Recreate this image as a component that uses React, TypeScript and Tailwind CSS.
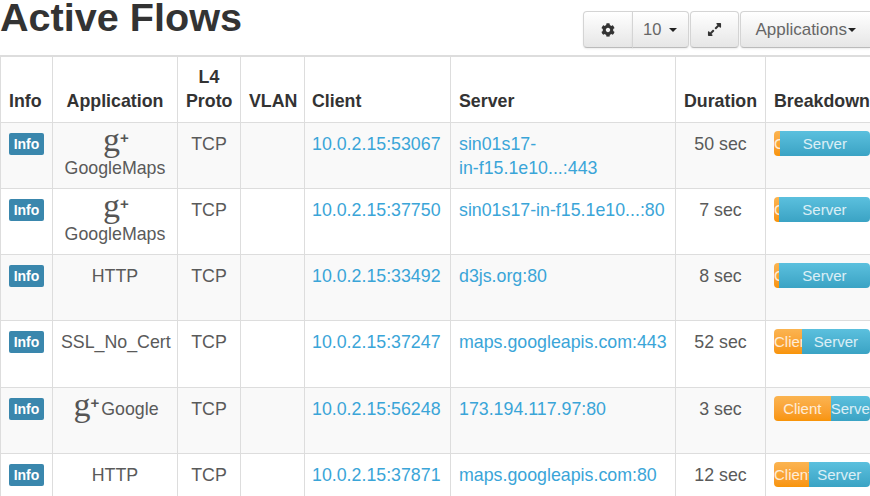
import { FaCog, FaExpandAlt } from 'react-icons/fa';

type Flow = {
  app: string;
  gplus?: 'stack' | 'inline';
  client: string;
  server: string;
  duration: string;
  clientPct: number;
};

const flows: Flow[] = [
  { app: 'GoogleMaps', gplus: 'stack', client: '10.0.2.15:53067', server: 'sin01s17-\nin-f15.1e10...:443', duration: '50 sec', clientPct: 6 },
  { app: 'GoogleMaps', gplus: 'stack', client: '10.0.2.15:37750', server: 'sin01s17-in-f15.1e10...:80', duration: '7 sec', clientPct: 5 },
  { app: 'HTTP', client: '10.0.2.15:33492', server: 'd3js.org:80', duration: '8 sec', clientPct: 5 },
  { app: 'SSL_No_Cert', client: '10.0.2.15:37247', server: 'maps.googleapis.com:443', duration: '52 sec', clientPct: 29 },
  { app: 'Google', gplus: 'inline', client: '10.0.2.15:56248', server: '173.194.117.97:80', duration: '3 sec', clientPct: 59 },
  { app: 'HTTP', client: '10.0.2.15:37871', server: 'maps.googleapis.com:80', duration: '12 sec', clientPct: 36 },
];

const th = 'border border-[#ddd] px-2 pb-[9px] align-bottom font-bold text-[#333]';
const td = 'border border-[#ddd] px-2 pt-[9px] align-top';
const btn = 'flex h-[37px] items-center justify-center border border-[#d4d4d4] border-b-[#bbb] bg-gradient-to-b from-white to-[#e6e6e6] text-[#666] shadow-[0_1px_2px_rgba(0,0,0,0.08)]';

const GPlus = () => (
  <span className="flex items-start text-[#555]">
    <span className="-mt-[4px] ml-[2px] font-['Liberation_Serif',serif] text-[34px] leading-[24px]">g</span>
    <span className="mt-[-1px] text-[15px] font-bold leading-[14px]">+</span>
  </span>
);

const Breakdown = ({ pct }: { pct: number }) => (
  <div className="-mt-px flex h-[25px] w-[96px] overflow-hidden rounded-[4px] text-[15px] leading-[25px] text-white/80">
    <div className="overflow-hidden whitespace-nowrap bg-gradient-to-b from-[#fbb450] to-[#f89406] text-center" style={{ width: `${pct}%` }}>
      Client
    </div>
    <div className="flex-1 overflow-hidden whitespace-nowrap bg-gradient-to-b from-[#5bc0de] to-[#3aa3c4] text-center">Server</div>
  </div>
);

export default function App() {
  return (
    <div className="h-[496px] w-[870px] overflow-hidden bg-white font-['Liberation_Sans',sans-serif] text-[17.8px] text-[#5a5a5a]">
      <div className="flex h-[55px] items-start justify-between">
        <h1 className="text-[39.6px] font-bold leading-[35px] text-[#333]">Active Flows</h1>
        <div className="mt-[11px] flex w-[287px] shrink-0 text-[16.5px]">
          <div className={`${btn} w-[50px] rounded-l-[4px]`}>
            <FaCog className="text-[14px] text-[#333]" />
          </div>
          <div className={`${btn} -ml-px w-[57px] gap-2 rounded-r-[4px]`}>
            10
            <span className="border-x-[4px] border-t-[4px] border-x-transparent border-t-[#222]" />
          </div>
          <div className={`${btn} ml-px w-[50px] rounded-[4px]`}>
            <FaExpandAlt className="text-[15px] text-[#333]" />
          </div>
          <div className={`${btn} ml-[1px] w-[130px] gap-px rounded-l-[4px] border-r-0 text-[17px]`}>
            Applications
            <span className="border-x-[4px] border-t-[4px] border-x-transparent border-t-[#222]" />
          </div>
        </div>
      </div>
      <table className="w-[880px] table-fixed border-collapse border-t-2 border-[#ddd] leading-[24px]">
        <colgroup>
          <col className="w-[52px]" />
          <col className="w-[125px]" />
          <col className="w-[63px]" />
          <col className="w-[64px]" />
          <col className="w-[146px]" />
          <col className="w-[225px]" />
          <col className="w-[90px]" />
          <col className="w-[115px]" />
        </colgroup>
        <thead>
          <tr className="h-[66px]">
            <th className={`${th} text-left`}>Info</th>
            <th className={`${th} text-center`}>Application</th>
            <th className={`${th} text-center`}>L4 Proto</th>
            <th className={`${th} text-center`}>VLAN</th>
            <th className={`${th} pl-[7px] text-left`}>Client</th>
            <th className={`${th} text-left`}>Server</th>
            <th className={`${th} text-center`}>Duration</th>
            <th className={`${th} text-left`}>Breakdown</th>
          </tr>
        </thead>
        <tbody>
          {flows.map((f, i) => (
            <tr key={i} className={`${i === 3 ? 'h-[67px]' : 'h-[66px]'} ${i % 2 === 0 ? 'bg-[#f9f9f9]' : 'bg-white'}`}>
              <td className={td}>
                <span className="mt-px block h-[22px] w-[35px] rounded-[2px] bg-[#3a87ad] text-center text-[14px] font-bold leading-[22px] text-white">
                  Info
                </span>
              </td>
              <td className={`${td} whitespace-nowrap text-center`}>
                {f.gplus === 'stack' && (
                  <div className="flex h-[24px] justify-center">
                    <GPlus />
                  </div>
                )}
                {f.gplus === 'inline' ? (
                  <div className="flex items-start justify-center gap-[2px]">
                    <GPlus />
                    {f.app}
                  </div>
                ) : (
                  f.app
                )}
              </td>
              <td className={`${td} text-center`}>TCP</td>
              <td className={td}></td>
              <td className={`${td} pl-[7px]`}>
                <a className="text-[#3aa5d8]">{f.client}</a>
              </td>
              <td className={td}>
                <a className="whitespace-pre text-[#3aa5d8]">{f.server}</a>
              </td>
              <td className={`${td} text-center`}>{f.duration}</td>
              <td className={td}>
                <Breakdown pct={f.clientPct} />
              </td>
            </tr>
          ))}
        </tbody>
      </table>
    </div>
  );
}
